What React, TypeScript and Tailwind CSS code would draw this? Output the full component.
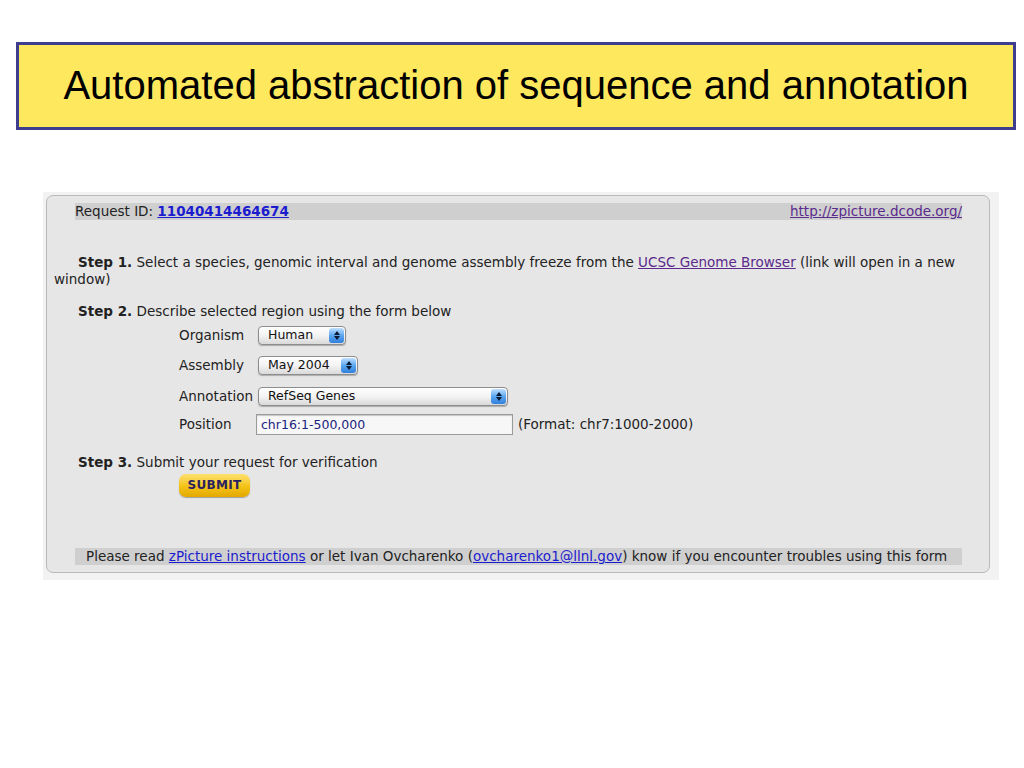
import React from "react";

function Select({ label, width }: { label: string; width: string }) {
  return (
    <div
      className={`${width} h-[19px] flex items-stretch rounded-[4px] border border-[#8d8d8d] bg-gradient-to-b from-[#ffffff] via-[#f3f3f3] to-[#d9d9d9] shadow-[0_1px_1px_rgba(0,0,0,0.25)] overflow-hidden`}
    >
      <div className="flex-1 flex items-center pl-[9px] text-[12.5px] leading-none text-[#111]">{label}</div>
      <div className="w-[15px] my-[1px] mr-[1px] rounded-[3px] bg-gradient-to-b from-[#bfe0ff] via-[#5aa6f0] to-[#2f7fdc] flex flex-col items-center justify-center gap-[1px]">
        <svg width="6" height="4" viewBox="0 0 6 4"><path d="M3 0 L6 4 L0 4 Z" fill="#0b1a33" /></svg>
        <svg width="6" height="4" viewBox="0 0 6 4"><path d="M0 0 L6 0 L3 4 Z" fill="#0b1a33" /></svg>
      </div>
    </div>
  );
}

export default function App() {
  const font = { fontFamily: '"DejaVu Sans", Verdana, sans-serif' };
  return (
    <div className="w-[1024px] h-[768px] bg-white overflow-hidden">
      <div className="ml-[16px] mt-[42px] w-[1000px] h-[88px] border-[3px] border-[#3f3d8e] bg-[#fee85e] flex items-center justify-center">
        <div
          className="text-[40px] text-black leading-none -mt-[2px]"
          style={{ fontFamily: '"Liberation Sans", Arial, sans-serif' }}
        >
          Automated abstraction of sequence and annotation
        </div>
      </div>

      <div className="ml-[43px] mt-[62px] w-[956px] h-[388px] bg-[#f2f2f2] pt-[3px] pl-[3px]">
        <div
          className="w-[944px] h-[378px] rounded-[7px] border border-[#b9b9b9] bg-[#e6e6e6] text-[13.5px] text-[#222] leading-[17px]"
          style={font}
        >
          <div className="ml-[28px] mr-[27px] mt-[7px] h-[17px] bg-[#cfcfcf] flex justify-between items-center">
            <div>
              Request ID:{" "}
              <span className="font-bold text-[#1c1ccf] underline">11040414464674</span>
            </div>
            <span className="text-[#5a2a8c] underline">http://zpicture.dcode.org/</span>
          </div>

          <div className="mt-[34px] flex flex-col">
            <div className="pl-[31px] whitespace-nowrap">
              <b>Step 1.</b> Select a species, genomic interval and genome assembly freeze from the{" "}
              <span className="text-[#5a2a8c] underline">UCSC Genome Browser</span> (link will open in a new
            </div>
            <div className="pl-[7px]">window)</div>
          </div>

          <p className="mt-[15px] pl-[31px]">
            <b>Step 2.</b> Describe selected region using the form below
          </p>

          <div className="ml-[132px] mt-[4px] flex flex-col">
            <div className="flex items-center h-[22px]">
              <span className="w-[79px]">Organism</span>
              <Select label="Human" width="w-[88px]" />
            </div>
            <div className="flex items-center h-[22px] mt-[8px]">
              <span className="w-[79px]">Assembly</span>
              <Select label="May 2004" width="w-[100px]" />
            </div>
            <div className="flex items-center h-[22px] mt-[9px]">
              <span className="w-[79px]">Annotation</span>
              <Select label="RefSeq Genes" width="w-[250px]" />
            </div>
            <div className="flex items-center h-[22px] mt-[6px]">
              <span className="w-[77px]">Position</span>
              <div className="w-[257px] h-[21px] border border-[#9a9a9a] bg-[#f7f7f7] shadow-[inset_0_1px_1px_rgba(0,0,0,0.2)] flex items-center pl-[4px] text-[12.5px] text-[#1a237e]">
                chr16:1-500,000
              </div>
              <span className="ml-[5px]">(Format: chr7:1000-2000)</span>
            </div>
          </div>

          <p className="mt-[19px] pl-[31px]">
            <b>Step 3.</b> Submit your request for verification
          </p>
          <div className="ml-[132px] mt-[3px] w-[71px] h-[23px] rounded-[7px] bg-gradient-to-b from-[#fde16a] via-[#f5c518] to-[#e3a800] shadow-[0_1px_1px_rgba(0,0,0,0.3)] flex items-center justify-center">
            <span
              className="text-[12px] font-black text-[#2a2260] tracking-[0.3px]"
              style={{ fontFamily: '"DejaVu Sans", "Liberation Sans", sans-serif' }}
            >
              SUBMIT
            </span>
          </div>

          <p className="ml-[28px] mr-[27px] mt-[51px] h-[17px] bg-[#cfcfcf] pl-[11px] whitespace-nowrap">
            Please read <span className="text-[#1c1ccf] underline">zPicture instructions</span> or let Ivan Ovcharenko (
            <span className="text-[#1c1ccf] underline">ovcharenko1@llnl.gov</span>) know if you encounter troubles using
            this form
          </p>
        </div>
      </div>
    </div>
  );
}
